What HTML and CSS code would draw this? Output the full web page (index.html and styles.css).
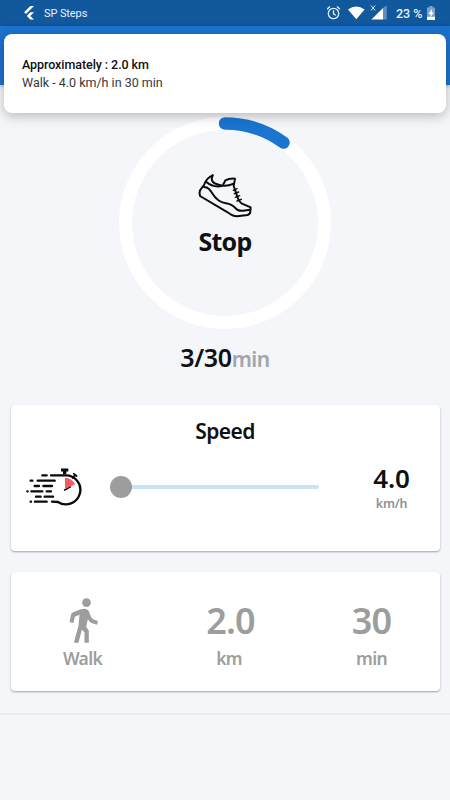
FILE: index.html
```html
<!DOCTYPE html>
<html lang="en">
<head>
    <meta charset="UTF-8">
    <meta name="viewport" content="width=device-width, initial-scale=1.0">
    <title>SP Steps</title>
    <link rel="stylesheet" href="styles.css">
</head>
<body>
    <!-- Status bar -->
    <div class="status-bar">
        <svg class="flutter-logo" viewBox="0 0 12 14">
            <path d="M7.3 0H11L3 8 1 6.2z" fill="#fff"/>
            <path d="M7.3 6.3H11L7.3 9.9 11 13.6H7.3L3.7 9.9z" fill="#fff"/>
        </svg>
        <span class="app-name">SP Steps</span>
        <svg class="status-icons" viewBox="0 0 64 16">
            <g fill="none" stroke="#e8f0f8" stroke-width="1.3">
                <circle cx="6.500" cy="8.5" r="5.2"/>
                <path d="M6.500 5.3v3.6l2.4 1.3M0 4.2l3-2.6M13 4.2l-3-2.6"/>
            </g>
            <path d="M21 4.4Q29.3-1.6 37.6 4.4L29.300 14.3z" fill="#fff"/>
            <path d="M44.4 14.5L56 3v11.5z" fill="#fff"/>
            <path d="M56 3l3.8-2.8v14.3H56z" fill="#608fbe"/>
            <path d="M44 .5l4.2 5M48.2.5l-4.2 5" stroke="#d4e1ef" stroke-width="1"/>
        </svg>
        <span class="battery-text">23 %</span>
        <svg class="battery-icon" viewBox="0 0 8 14">
            <path d="M2.4 0h3.2v1.4H8V14H0V1.4h2.4z" fill="#7da3c9"/>
            <path d="M0 10.8h8V14H0z" fill="#fff"/>
            <path d="M4.8 3L1.5 8h2v3.3L6.8 6.5h-2z" fill="#fff"/>
        </svg>
    </div>
    <div class="app-bar"></div>

    <!-- Notification -->
    <div class="notification">
        <div class="notification-title">Approximately : 2.0 km</div>
        <div class="notification-text">Walk - 4.0 km/h in 30 min</div>
    </div>

    <!-- Progress ring -->
    <div class="progress">
        <svg class="ring" viewBox="0 0 212 212">
            <circle cx="106" cy="106" r="99.5" fill="none" stroke="#fff" stroke-width="13"/>
            <path d="M106 6.5A99.5 99.5 0 0 1 164.5 25.5" fill="none" stroke="#1a74d0" stroke-width="12.5" stroke-linecap="round"/>
        </svg>
        <svg class="shoe" viewBox="50 40 168 138">
            <g fill="none" stroke="#0c0c10" stroke-width="6" stroke-linecap="round" stroke-linejoin="round">
                <path d="M97 47C82 53 75 63 71 76L59 92Q56 101 59 109L142 158Q156 170 170 170L202 166Q211 162 210 154L211 143L185 132Q175 125 170 108L160 79 164 57Q146 56 135 62Q133 69 129 73"/>
                <path d="M97 47L94 56Q95 69 108 73Q133 84 160 72"/>
                <path d="M78 67Q98 84 124 79"/>
                <path d="M71 82C94 83 92 105 112 120C128 136 148 125 163 143Q174 156 188 153L210 150"/>
                <path d="M159 92l11-5M162 102l13-5M165 113l13-5M170 124l13-5" stroke-width="4.5"/>
            </g>
        </svg>
        <div class="progress-label">Stop</div>
    </div>
    <div class="time"><span class="time-value">3/30</span><span class="time-unit">min</span></div>

    <!-- Speed -->
    <div class="card speed-card">
        <div class="card-title">Speed</div>
        <div class="speed-row">
            <svg class="stopwatch" viewBox="45 35 171 120">
                <g fill="none" stroke="#0a0a0a" stroke-width="7" stroke-linecap="round">
                    <path d="M123 60H165A43.500 43.500 0 1 1 144 140L126 139"/>
                    <path d="M97 60h13M62 76h5M83 76h51M74 92h13M100 92h26M52 108h1M64 108h33M110 108h13M78 124h14M104 124h25M62 139h1M75 139h35"/>
                    <path d="M164 45v12" stroke-width="10" stroke-linecap="butt"/>
                    <path d="M153 44h22" stroke-width="9" stroke-linecap="butt"/>
                    <path d="M188 68l7-9M191 55l9 7" stroke-width="5"/>
                    <path d="M164 104l17-10" stroke-width="5"/>
                </g>
                <path d="M165 67Q186 67 195 87L165 101z" fill="#f9595d"/>
            </svg>
            <div class="slider">
                <div class="slider-thumb"></div>
                <div class="slider-track"></div>
            </div>
            <div class="speed-info">
                <div class="speed-value">4.0</div>
                <div class="speed-unit">km/h</div>
            </div>
        </div>
    </div>

    <!-- Summary -->
    <div class="card summary-card">
        <div class="summary-item walk">
            <svg class="walk-icon" viewBox="88 22 86 135">
                <circle cx="140" cy="36" r="13" fill="#9d9d9d"/>
                <path d="M89 95L94 70Q96 67 100 65L123 56Q135 52 144 58Q148 61 149 67Q152 80 160 86L174 91L172 102L157 98Q148 94 144 86L139 108L147 120V156H134V125L126 117L116 156H102L116 105L119 72L105 78L101 97z" fill="#9d9d9d"/>
            </svg>
            <div class="summary-label">Walk</div>
        </div>
        <div class="summary-item distance">
            <div class="summary-value">2.0</div>
            <div class="summary-label">km</div>
        </div>
        <div class="summary-item duration">
            <div class="summary-value">30</div>
            <div class="summary-label">min</div>
        </div>
    </div>
    <div class="bottom-line"></div>
</body>
</html>
```
FILE: styles.css
```css
* {
    box-sizing: border-box;
}
body {
    margin: 0;
    height: 800px;
    overflow: hidden;
    background-color: #f4f6fa;
    color: #101114;
    font-family: "Noto Sans", sans-serif;
    font-weight: 600;
}
svg {
    display: block;
    flex-shrink: 0;
}

/* Status bar */
.status-bar {
    height: 26px;
    padding: 0 15px 0 23px;
    background-color: #12589c;
    color: #e8f0f8;
    display: flex;
    align-items: center;
    font-family: Roboto, sans-serif;
}
.flutter-logo {
    width: 12px;
    height: 14px;
}
.app-name {
    margin-left: 9px;
    font-size: 11px;
    font-weight: 400;
    letter-spacing: -0.1px;
}
.status-icons {
    width: 64px;
    height: 16px;
    margin-left: auto;
}
.battery-text {
    width: 26px;
    margin-left: 5px;
    font-size: 12.5px;
    font-weight: 500;
    white-space: nowrap;
}
.battery-icon {
    width: 8px;
    height: 14px;
    margin-left: 5px;
}
.app-bar {
    height: 59px;
    background-color: #1a72cf;
    box-shadow: 0 1px 4px rgba(0,0,0,0.3);
}

/* Notification */
.notification {
    position: absolute;
    top: 34px;
    left: 4px;
    width: 442px;
    height: 79px;
    padding: 22px 18px;
    background-color: white;
    border-radius: 8px;
    box-shadow: 0 3px 12px rgba(0,0,0,0.25);
    font-family: Roboto, sans-serif;
    font-size: 12.5px;
    line-height: 18px;
}
.notification-title {
    font-weight: 500;
    letter-spacing: -0.07px;
}
.notification-text {
    color: #37383a;
    font-weight: 400;
}

/* Progress ring */
.progress {
    width: 212px;
    height: 212px;
    margin: 32px auto 0;
    display: grid;
    grid-template-rows: 56px 46px 1fr;
    justify-items: center;
}
.ring {
    width: 212px;
    height: 212px;
    grid-area: 1 / 1 / 4 / 2;
}
.shoe {
    width: 56px;
    height: 46px;
    grid-area: 2 / 1;
}
.progress-label {
    grid-area: 3 / 1;
    margin-top: 4px;
    font-size: 25px;
    font-weight: 700;
    letter-spacing: -0.8px;
    line-height: 36px;
}
.time {
    height: 36px;
    margin-top: 10px;
    line-height: 36px;
    text-align: center;
}
.time-value {
    font-size: 25px;
    letter-spacing: -0.4px;
}
.time-unit {
    color: #a4a5a8;
    font-size: 21px;
    letter-spacing: -0.5px;
}

/* Cards */
.card {
    width: 429px;
    margin: 0 auto;
    background-color: white;
    border-radius: 4px;
    box-shadow: 0 1px 2px rgba(0,0,0,0.35);
}
.speed-card {
    height: 146px;
    margin-top: 30px;
    padding-top: 10px;
}
.card-title {
    font-size: 21px;
    letter-spacing: -0.6px;
    line-height: 32px;
    text-align: center;
}
.speed-row {
    height: 60px;
    margin-top: 10px;
    padding: 0 15px 0 14px;
    display: flex;
    align-items: center;
}
.stopwatch {
    width: 57px;
    height: 40px;
}
.slider {
    width: 209px;
    margin-left: 28px;
    display: flex;
    align-items: center;
}
.slider-thumb {
    width: 22px;
    height: 22px;
    background-color: #9d9d9d;
    border-radius: 50%;
}
.slider-track {
    flex: 1;
    height: 4px;
    background-color: #c9e2f7;
    border-radius: 0 2px 2px 0;
}
.speed-info {
    width: 66px;
    margin-left: auto;
    text-align: center;
}
.speed-value {
    font-size: 26px;
    letter-spacing: -0.2px;
    line-height: 34px;
}
.speed-unit {
    color: #919191;
    font-size: 12.5px;
    line-height: 18px;
    letter-spacing: -0.2px;
}

/* Summary */
.summary-card {
    height: 119px;
    margin-top: 21px;
    padding: 26px 34px 0 38px;
    display: flex;
    justify-content: space-between;
    color: #9d9d9d;
}
.summary-item {
    width: 68px;
    text-align: center;
    display: flex;
    flex-direction: column;
    align-items: center;
}
.distance {
    margin-left: 4px;
}
.walk-icon {
    width: 29px;
    height: 45px;
    margin-left: 2px;
}
.summary-value {
    height: 45px;
    font-size: 36px;
    letter-spacing: -0.8px;
    line-height: 46px;
}
.distance .summary-value {
    margin-left: 3px;
}
.summary-label {
    font-size: 17.5px;
    letter-spacing: -0.7px;
    line-height: 31px;
}
.bottom-line {
    height: 2px;
    margin-top: 22px;
    background-color: #e8eaee;
}
```
